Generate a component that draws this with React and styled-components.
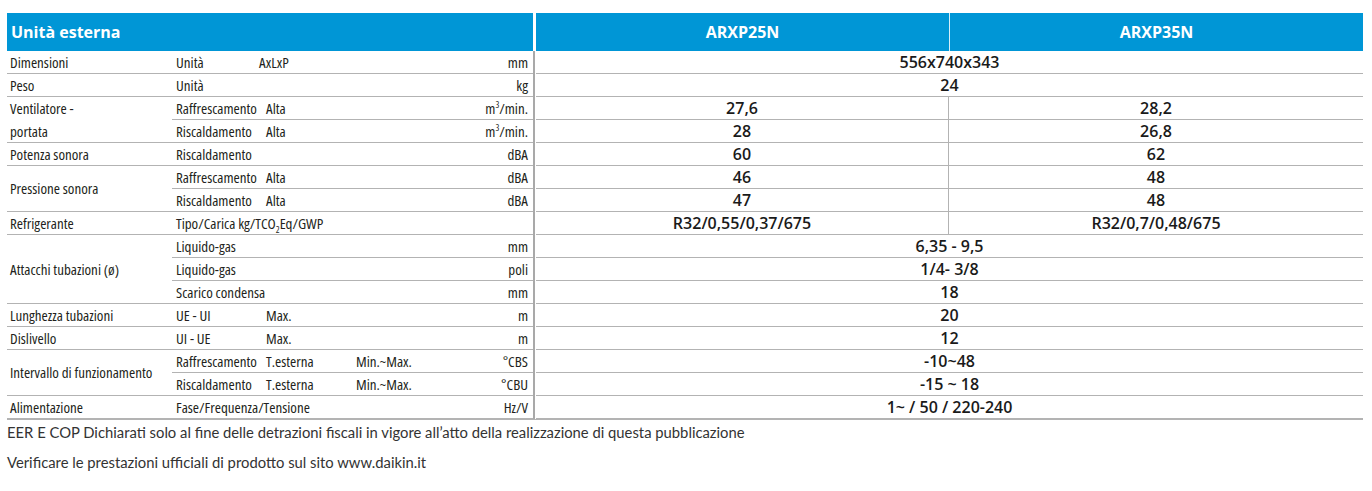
import styled, { createGlobalStyle } from "styled-components";

const GlobalStyle = createGlobalStyle`
  body {
    margin: 0;
    background: #fff;
  }
`;

const rows = [
  { main: "Dimensioni", subs: [{ name: "Unità", spec: "AxLxP", shift: true, unit: "mm", vals: ["556x740x343"] }] },
  { main: "Peso", subs: [{ name: "Unità", unit: "kg", vals: ["24"] }] },
  {
    main: (
      <>
        Ventilatore -<br />
        portata
      </>
    ),
    top: true,
    subs: [
      { name: "Raffrescamento", spec: "Alta", unit: <>m<sup>3</sup>/min.</>, vals: ["27,6", "28,2"] },
      { name: "Riscaldamento", spec: "Alta", unit: <>m<sup>3</sup>/min.</>, vals: ["28", "26,8"] },
    ],
  },
  { main: "Potenza sonora", subs: [{ name: "Riscaldamento", unit: "dBA", vals: ["60", "62"] }] },
  {
    main: "Pressione sonora",
    subs: [
      { name: "Raffrescamento", spec: "Alta", unit: "dBA", vals: ["46", "48"] },
      { name: "Riscaldamento", spec: "Alta", unit: "dBA", vals: ["47", "48"] },
    ],
  },
  {
    main: "Refrigerante",
    subs: [
      {
        name: <>Tipo/Carica kg/TCO<sub>2</sub>Eq/GWP</>,
        wide: true,
        vals: ["R32/0,55/0,37/675", "R32/0,7/0,48/675"],
      },
    ],
  },
  {
    main: "Attacchi tubazioni (ø)",
    subs: [
      { name: "Liquido-gas", unit: "mm", vals: ["6,35 - 9,5"] },
      { name: "Liquido-gas", unit: "poli", vals: ["1/4- 3/8"] },
      { name: "Scarico condensa", wide: true, unit: "mm", vals: ["18"] },
    ],
  },
  { main: "Lunghezza tubazioni", subs: [{ name: "UE - UI", spec: "Max.", unit: "m", vals: ["20"] }] },
  { main: "Dislivello", subs: [{ name: "UI - UE", spec: "Max.", unit: "m", vals: ["12"] }] },
  {
    main: "Intervallo di funzionamento",
    subs: [
      { name: "Raffrescamento", spec: "T.esterna", range: "Min.~Max.", unit: "°CBS", vals: ["-10~48"] },
      { name: "Riscaldamento", spec: "T.esterna", range: "Min.~Max.", unit: "°CBU", vals: ["-15 ~ 18"] },
    ],
  },
  {
    main: "Alimentazione",
    subs: [{ name: "Fase/Frequenza/Tensione", wide: true, unit: "Hz/V", vals: ["1~ / 50 / 220-240"] }],
  },
];

export default function App() {
  const totalRows = rows.reduce((n, r) => n + r.subs.length, 0);
  let line = 1;

  return (
    <>
      <GlobalStyle />
      <Page>
        <Header>
          <HeadCell $align="left">Unità esterna</HeadCell>
          <HeadGap />
          <HeadCell>ARXP25N</HeadCell>
          <HeadCell>ARXP35N</HeadCell>
        </Header>
        <Body>
          <Divider style={{ gridRow: `1 / ${totalRows + 1}` }} />
          {rows.map((row, i) => {
            const start = line;
            line += row.subs.length;
            return [
              <MainCell
                key={`m${i}`}
                $top={row.top}
                style={{ gridRow: `${start} / span ${row.subs.length}` }}
              >
                <span>{row.main}</span>
              </MainCell>,
              ...row.subs.map((s, j) => {
                const r = start + j;
                return [
                  <SubCell key={`s${i}-${j}`} style={{ gridRow: r }}>
                    <SubName $wide={s.wide}>{s.name}</SubName>
                    {!s.wide && <SubSpec $shift={s.shift}>{s.spec}</SubSpec>}
                    {!s.wide && <span>{s.range}</span>}
                    <Unit>{s.unit}</Unit>
                  </SubCell>,
                  s.vals.length === 1 ? (
                    <Value key={`v${i}-${j}`} $merged style={{ gridRow: r }}>
                      {s.vals[0]}
                    </Value>
                  ) : (
                    s.vals.map((v, k) => (
                      <Value key={`v${i}-${j}-${k}`} $col={4 + k} $split={k === 0} style={{ gridRow: r }}>
                        {v}
                      </Value>
                    ))
                  ),
                ];
              }),
            ];
          })}
        </Body>
        <Note>EER E COP Dichiarati solo al fine delle detrazioni fiscali in vigore all’atto della realizzazione di questa pubblicazione</Note>
        <Note $gap>Verificare le prestazioni ufficiali di prodotto sul sito www.daikin.it</Note>
      </Page>
    </>
  );
}

const Page = styled.div`
  padding: 13px 9px 0 7px;
`;

const Header = styled.div`
  display: grid;
  grid-template-columns: 526px 3px 413px 1fr;
  height: 38px;
`;

const HeadCell = styled.div`
  background: #0096d6;
  color: #fff;
  font-family: "Open Sans", "Liberation Sans", sans-serif;
  font-weight: 700;
  font-size: 16px;
  display: flex;
  align-items: center;
  justify-content: ${(p) => (p.$align === "left" ? "flex-start" : "center")};
  padding-left: ${(p) => (p.$align === "left" ? "4px" : "0")};
  & + & {
    border-left: 1px solid #d6eef9;
  }
`;

const HeadGap = styled.div`
  background: #fff;
`;

const Body = styled.div`
  display: grid;
  grid-template-columns: 165px 361px 3px 413px 1fr;
  grid-auto-rows: 23px;
  border-bottom: 1px solid #b3b3b3;
  font-family: "Open Sans", "Liberation Sans", sans-serif;
  font-stretch: 77%;
  font-size: 15px;
  color: #231f20;
`;

const MainCell = styled.div`
  grid-column: 1;
  display: flex;
  align-items: ${(p) => (p.$top ? "flex-start" : "center")};
  padding-left: 3px;
  line-height: 23px;
  border-bottom: 1px solid #b3b3b3;
  box-sizing: border-box;
  white-space: nowrap;
`;

const SubCell = styled.div`
  grid-column: 2;
  display: grid;
  grid-template-columns: 90px 90px 1fr auto;
  align-items: center;
  padding: 0 5px 0 4px;
  border-bottom: 1px solid #b3b3b3;
  box-sizing: border-box;
  white-space: nowrap;
  sup,
  sub {
    font-size: 9px;
    line-height: 0;
  }
`;

const SubName = styled.span`
  grid-column: ${(p) => (p.$wide ? "1 / 4" : "1")};
`;

const SubSpec = styled.span`
  margin-left: ${(p) => (p.$shift ? "-7px" : "0")};
`;

const Unit = styled.span`
  grid-column: 4;
  text-align: right;
`;

const Divider = styled.div`
  grid-column: 3;
  background: #a9a9a9;
  border-right: 1px solid #fff;
`;

const Value = styled.div`
  grid-column: ${(p) => (p.$merged ? "4 / 6" : p.$col)};
  display: flex;
  align-items: center;
  justify-content: center;
  border-bottom: 1px solid #b3b3b3;
  border-right: ${(p) => (p.$split ? "1px solid #b3b3b3" : "none")};
  box-sizing: border-box;
  font-family: "Open Sans", "Liberation Sans", sans-serif;
  font-stretch: normal;
  font-weight: 550;
  font-size: 16px;
  color: #1a1a1a;
`;

const Note = styled.p`
  margin: ${(p) => (p.$gap ? "12px 0 0" : "3px 0 0")};
  font-family: "Lato", "Open Sans", sans-serif;
  font-size: 14.8px;
  line-height: 18px;
  color: #333;
`;
